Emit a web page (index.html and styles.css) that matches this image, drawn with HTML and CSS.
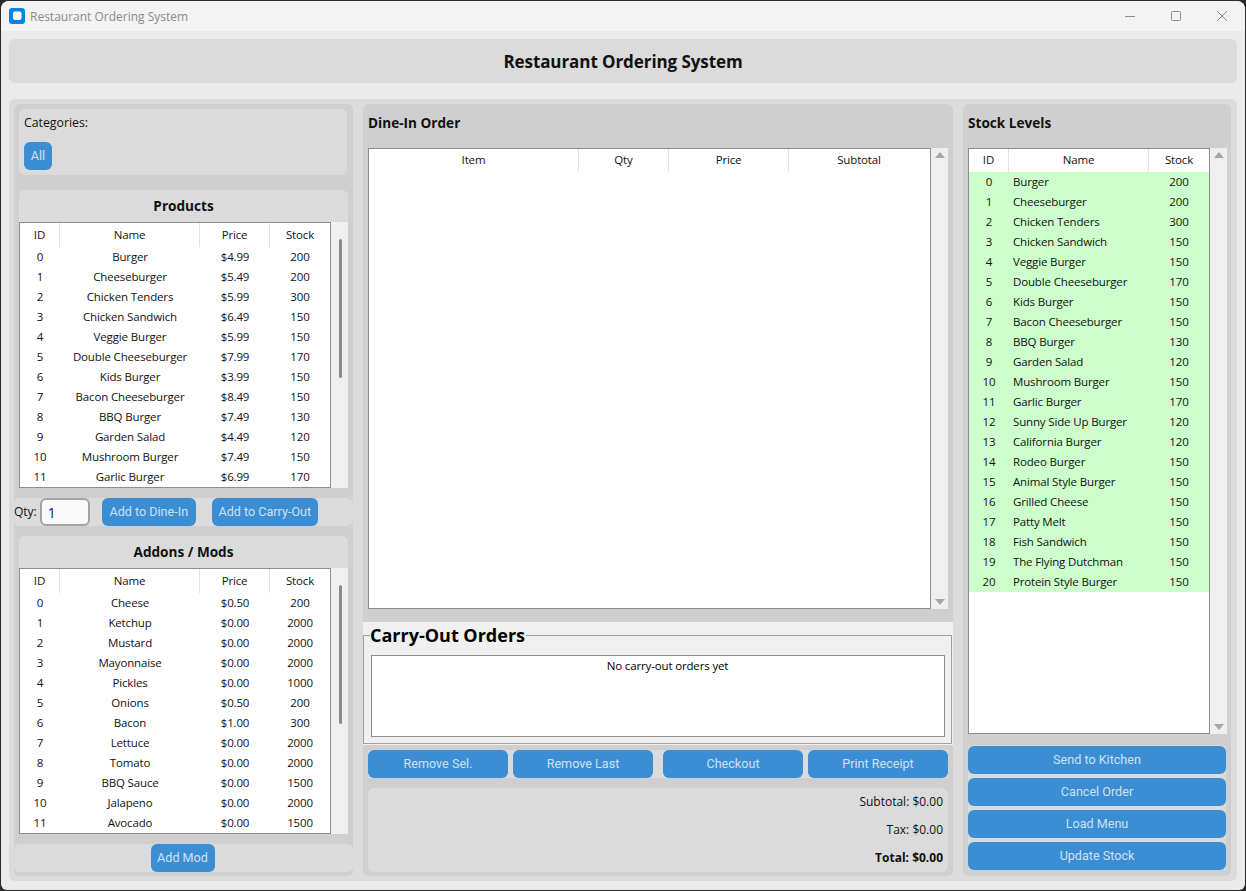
FILE: index.html
```html
<!DOCTYPE html>
<html lang="en">
<head>
  <meta charset="UTF-8">
  <title>Restaurant Ordering System</title>
  <link rel="stylesheet" href="styles.css">
</head>
<body>
  <div class="window">
    <!-- Title bar -->
    <div class="titlebar">
      <div class="app-title">
        <svg class="app-icon" width="16" height="16" viewBox="0 0 16 16"><rect width="16" height="16" rx="3" fill="#0a84e8"/><rect x="4" y="3.5" width="8.5" height="8.5" rx="2" fill="#fff"/></svg>
        <span>Restaurant Ordering System</span>
      </div>
      <div class="win-controls">
        <svg width="12" height="12" viewBox="0 0 12 12"><path d="M1 6.5H11" stroke="#8c8c8c" fill="none"/></svg>
        <svg width="12" height="12" viewBox="0 0 12 12"><rect x="1.5" y="1.5" width="9" height="9" rx="1" stroke="#8c8c8c" fill="none"/></svg>
        <svg width="12" height="12" viewBox="0 0 12 12"><path d="M1 1L11 11M11 1L1 11" stroke="#8c8c8c" fill="none"/></svg>
      </div>
    </div>

    <div class="app-header">Restaurant Ordering System</div>

    <div class="main">
      <!-- Left column -->
      <div class="col col-left">
        <div class="categories">
          <div class="cat-label">Categories:</div>
          <button class="btn btn-all"><span>All</span></button>
        </div>

        <div class="list-box products-box">
          <div class="box-title">Products</div>
          <div class="tree-wrap">
            <div class="tree tree-small">
              <table>
                <colgroup><col class="w40"><col class="w140"><col class="w70"><col class="w60"></colgroup>
                <thead><tr><th>ID</th><th>Name</th><th>Price</th><th>Stock</th></tr></thead>
                <tbody>
                  <tr><td>0</td><td>Burger</td><td>$4.99</td><td>200</td></tr>
                  <tr><td>1</td><td>Cheeseburger</td><td>$5.49</td><td>200</td></tr>
                  <tr><td>2</td><td>Chicken Tenders</td><td>$5.99</td><td>300</td></tr>
                  <tr><td>3</td><td>Chicken Sandwich</td><td>$6.49</td><td>150</td></tr>
                  <tr><td>4</td><td>Veggie Burger</td><td>$5.99</td><td>150</td></tr>
                  <tr><td>5</td><td>Double Cheeseburger</td><td>$7.99</td><td>170</td></tr>
                  <tr><td>6</td><td>Kids Burger</td><td>$3.99</td><td>150</td></tr>
                  <tr><td>7</td><td>Bacon Cheeseburger</td><td>$8.49</td><td>150</td></tr>
                  <tr><td>8</td><td>BBQ Burger</td><td>$7.49</td><td>130</td></tr>
                  <tr><td>9</td><td>Garden Salad</td><td>$4.49</td><td>120</td></tr>
                  <tr><td>10</td><td>Mushroom Burger</td><td>$7.49</td><td>150</td></tr>
                  <tr><td>11</td><td>Garlic Burger</td><td>$6.99</td><td>170</td></tr>
                </tbody>
              </table>
            </div>
            <div class="scroll scroll-thin"><div class="thumb thumb-products"></div></div>
          </div>
        </div>

        <div class="qty-row">
          <label class="qty-label" for="qty">Qty:</label>
          <input class="qty-input" id="qty" type="text" value="1">
          <button class="btn btn-dine"><span>Add to Dine-In</span></button>
          <button class="btn btn-carry"><span>Add to Carry-Out</span></button>
        </div>

        <div class="list-box addons-box">
          <div class="box-title">Addons / Mods</div>
          <div class="tree-wrap">
            <div class="tree tree-small">
              <table>
                <colgroup><col class="w40"><col class="w140"><col class="w70"><col class="w60"></colgroup>
                <thead><tr><th>ID</th><th>Name</th><th>Price</th><th>Stock</th></tr></thead>
                <tbody>
                  <tr><td>0</td><td>Cheese</td><td>$0.50</td><td>200</td></tr>
                  <tr><td>1</td><td>Ketchup</td><td>$0.00</td><td>2000</td></tr>
                  <tr><td>2</td><td>Mustard</td><td>$0.00</td><td>2000</td></tr>
                  <tr><td>3</td><td>Mayonnaise</td><td>$0.00</td><td>2000</td></tr>
                  <tr><td>4</td><td>Pickles</td><td>$0.00</td><td>1000</td></tr>
                  <tr><td>5</td><td>Onions</td><td>$0.50</td><td>200</td></tr>
                  <tr><td>6</td><td>Bacon</td><td>$1.00</td><td>300</td></tr>
                  <tr><td>7</td><td>Lettuce</td><td>$0.00</td><td>2000</td></tr>
                  <tr><td>8</td><td>Tomato</td><td>$0.00</td><td>2000</td></tr>
                  <tr><td>9</td><td>BBQ Sauce</td><td>$0.00</td><td>1500</td></tr>
                  <tr><td>10</td><td>Jalapeno</td><td>$0.00</td><td>2000</td></tr>
                  <tr><td>11</td><td>Avocado</td><td>$0.00</td><td>1500</td></tr>
                </tbody>
              </table>
            </div>
            <div class="scroll scroll-thin"><div class="thumb thumb-addons"></div></div>
          </div>
        </div>

        <div class="mod-row">
          <button class="btn btn-mod"><span>Add Mod</span></button>
        </div>
      </div>

      <!-- Center column -->
      <div class="col col-center">
        <div class="order-section">
          <div class="section-title">Dine-In Order</div>
          <div class="tree-wrap order-wrap">
            <div class="tree tree-large">
              <table>
                <colgroup><col class="w210"><col class="w90"><col class="w120"><col class="w140"></colgroup>
                <thead><tr><th>Item</th><th>Qty</th><th>Price</th><th>Subtotal</th></tr></thead>
              </table>
            </div>
            <div class="scroll">
              <span class="arrow-up"></span>
              <span class="arrow-down"></span>
            </div>
          </div>
        </div>

        <div class="carry-section">
          <fieldset class="carry-frame">
            <legend>Carry-Out Orders</legend>
            <div class="carry-list">No carry-out orders yet</div>
          </fieldset>
        </div>

        <div class="action-row">
          <button class="btn"><span>Remove Sel.</span></button>
          <button class="btn"><span>Remove Last</span></button>
          <button class="btn btn-gap"><span>Checkout</span></button>
          <button class="btn"><span>Print Receipt</span></button>
        </div>

        <div class="totals">
          <div>Subtotal: $0.00</div>
          <div>Tax: $0.00</div>
          <div class="total-strong">Total: $0.00</div>
        </div>
      </div>

      <!-- Right column -->
      <div class="col col-right">
        <div class="section-title">Stock Levels</div>
        <div class="tree-wrap stock-wrap">
          <div class="tree tree-large">
            <table class="stock-table">
              <colgroup><col class="w40"><col class="w140"><col class="w60"></colgroup>
              <thead><tr><th>ID</th><th>Name</th><th>Stock</th></tr></thead>
              <tbody>
                <tr><td>0</td><td>Burger</td><td>200</td></tr>
                <tr><td>1</td><td>Cheeseburger</td><td>200</td></tr>
                <tr><td>2</td><td>Chicken Tenders</td><td>300</td></tr>
                <tr><td>3</td><td>Chicken Sandwich</td><td>150</td></tr>
                <tr><td>4</td><td>Veggie Burger</td><td>150</td></tr>
                <tr><td>5</td><td>Double Cheeseburger</td><td>170</td></tr>
                <tr><td>6</td><td>Kids Burger</td><td>150</td></tr>
                <tr><td>7</td><td>Bacon Cheeseburger</td><td>150</td></tr>
                <tr><td>8</td><td>BBQ Burger</td><td>130</td></tr>
                <tr><td>9</td><td>Garden Salad</td><td>120</td></tr>
                <tr><td>10</td><td>Mushroom Burger</td><td>150</td></tr>
                <tr><td>11</td><td>Garlic Burger</td><td>170</td></tr>
                <tr><td>12</td><td>Sunny Side Up Burger</td><td>120</td></tr>
                <tr><td>13</td><td>California Burger</td><td>120</td></tr>
                <tr><td>14</td><td>Rodeo Burger</td><td>150</td></tr>
                <tr><td>15</td><td>Animal Style Burger</td><td>150</td></tr>
                <tr><td>16</td><td>Grilled Cheese</td><td>150</td></tr>
                <tr><td>17</td><td>Patty Melt</td><td>150</td></tr>
                <tr><td>18</td><td>Fish Sandwich</td><td>150</td></tr>
                <tr><td>19</td><td>The Flying Dutchman</td><td>150</td></tr>
                <tr><td>20</td><td>Protein Style Burger</td><td>150</td></tr>
              </tbody>
            </table>
          </div>
          <div class="scroll">
            <span class="arrow-up"></span>
            <span class="arrow-down"></span>
          </div>
        </div>
        <div class="stock-actions">
          <button class="btn"><span>Send to Kitchen</span></button>
          <button class="btn"><span>Cancel Order</span></button>
          <button class="btn"><span>Load Menu</span></button>
          <button class="btn"><span>Update Stock</span></button>
        </div>
      </div>
    </div>
  </div>
</body>
</html>
```

FILE: styles.css
```css
html, body {
  margin: 0;
  height: 100%;
  background-color: #2a2a2a;
  overflow: hidden;
}
body {
  font-family: "Open Sans", "Noto Sans", sans-serif;
  font-size: 12px;
  color: #111;
}
.window {
  box-sizing: border-box;
  width: 1244px;
  height: 889px;
  margin: 1px 0 0 1px;
  background-color: #ebebeb;
  border-radius: 8px 8px 6px 6px;
  overflow: hidden;
}

/* title bar */
.titlebar {
  display: flex;
  align-items: center;
  justify-content: space-between;
  height: 30px;
  background-color: #f3f3f3;
}
.app-title {
  display: flex;
  align-items: center;
  gap: 5px;
  padding-left: 8px;
  color: #8a8a8a;
}
.win-controls {
  display: flex;
  gap: 34px;
  padding-right: 17px;
}

.app-header {
  height: 44px;
  margin: 8px 8px 16px;
  line-height: 46px;
  text-align: center;
  font-size: 17px;
  font-weight: bold;
  letter-spacing: -0.08px;
  background-color: #dbdbdb;
  border-radius: 6px;
}

.main {
  display: grid;
  grid-template-columns: 339px 590px 268px;
  gap: 10px;
  height: 772px;
  margin: 0 8px;
  padding: 5px;
  background-color: #dbdbdb;
  border-radius: 6px;
}
.col {
  display: flex;
  flex-direction: column;
  background-color: #cfcfcf;
  border-radius: 6px;
}

/* buttons - square backing shows at the rounded corners */
.btn {
  height: 28px;
  padding: 0;
  border: none;
  background-color: #dbdbdb;
  color: #cfe0f2;
  font-family: Roboto, sans-serif;
  font-size: 12.6px;
}
.btn span {
  display: block;
  height: 100%;
  line-height: 27px;
  background-color: #3b8ed3;
  border-radius: 6px;
}

/* left column */
.categories {
  height: 66px;
  margin: 5px 6px 15px 5px;
  padding: 5px 5px;
  box-sizing: border-box;
  background-color: #dbdbdb;
  border-radius: 6px;
}
.cat-label {
  height: 28px;
  font-size: 12.3px;
}
.btn-all {
  width: 28px;
}
.list-box {
  margin: 0 5px 10px;
  background-color: #dbdbdb;
  border-radius: 6px 6px 0 0;
}
.box-title {
  height: 32px;
  line-height: 32px;
  text-align: center;
  font-size: 13.6px;
  font-weight: bold;
}
.products-box .tree-wrap,
.addons-box .tree-wrap {
  height: 266px;
}
.qty-row {
  display: flex;
  align-items: center;
  height: 28px;
  margin-bottom: 10px;
  background-color: #dbdbdb;
  border-radius: 6px;
}
.qty-label {
  padding-bottom: 2px;
}
.qty-input {
  box-sizing: border-box;
  width: 50px;
  height: 28px;
  margin-left: 3px;
  padding: 0 6px;
  border: 2px solid #a3a3a3;
  border-radius: 6px;
  background-color: #f9f9f9;
  color: #1a1a2a;
  font-family: "Open Sans", sans-serif;
  font-size: 14px;
}
.btn-dine {
  width: 94px;
  margin-left: 12px;
}
.btn-carry {
  width: 106px;
  margin-left: 16px;
}
.mod-row {
  display: flex;
  justify-content: center;
  height: 28px;
  background-color: #dbdbdb;
  border-radius: 6px;
}
.btn-mod {
  width: 64px;
  margin-right: 2px;
}

/* trees */
.tree-wrap {
  display: flex;
}
.tree {
  flex: 1;
  box-sizing: border-box;
  background-color: #fff;
  border: 1px solid #8a8d91;
  overflow: hidden;
  font-size: 11.5px;
  letter-spacing: -0.15px;
}
.tree table {
  border-collapse: separate;
  border-spacing: 0;
  table-layout: fixed;
}
.tree th {
  height: 24px;
  padding: 0 0 2px;
  box-sizing: border-box;
  font-weight: normal;
  border-right: 1px solid #e2e2e2;
}
.tree-large th {
  height: 23px;
}
.tree th:last-child {
  border-right: none;
}
.tree td {
  height: 20px;
  padding: 0 0 2px;
  box-sizing: border-box;
  text-align: center;
  white-space: nowrap;
}
.stock-table tbody tr {
  background-color: #ccffcc;
}
.stock-table td:nth-child(2) {
  text-align: left;
  padding-left: 4px;
}
.w40 { width: 40px; }
.w60 { width: 60px; }
.w70 { width: 70px; }
.w90 { width: 90px; }
.w120 { width: 120px; }
.w140 { width: 140px; }
.w210 { width: 210px; }

.scroll {
  display: flex;
  flex-direction: column;
  justify-content: space-between;
  align-items: center;
  box-sizing: border-box;
  width: 17px;
  padding: 4px 0;
  background-color: #efefef;
}
.scroll-thin {
  display: block;
  padding: 17px 0 0 8px;
}
.thumb {
  width: 3px;
  background-color: #8b8b8b;
  border-radius: 2px;
}
.thumb-products {
  height: 139px;
}
.thumb-addons {
  height: 139px;
}
.arrow-up,
.arrow-down {
  width: 0;
  height: 0;
  border-left: 5px solid transparent;
  border-right: 5px solid transparent;
}
.arrow-up {
  border-bottom: 6px solid #a6a6a6;
}
.arrow-down {
  border-top: 6px solid #a6a6a6;
}

/* center column */
.section-title {
  height: 44px;
  padding: 5px 5px 0;
  box-sizing: border-box;
  line-height: 28px;
  font-size: 13.6px;
  font-weight: bold;
}
.order-section {
  height: 518px;
}
.order-wrap {
  height: 461px;
  margin: 0 5px;
}
.carry-section {
  box-sizing: border-box;
  height: 123px;
  background-color: #f0f0f0;
}
.carry-frame {
  box-sizing: border-box;
  height: 122px;
  margin: 0 1px 0 0;
  padding: 6px 6px 6px 7px;
  border: 1px solid #a0a0a0;
}
.carry-frame legend {
  padding: 0 1px 0 0;
  margin-left: -1px;
  color: #000;
  font-size: 18px;
  font-weight: bold;
  line-height: 27px;
}
.carry-list {
  box-sizing: border-box;
  height: 82px;
  padding-left: 19px;
  background-color: #fff;
  border: 1px solid #8a8d91;
  text-align: center;
  line-height: 20px;
  font-size: 11.5px;
  letter-spacing: -0.15px;
  color: #000;
}
.action-row {
  display: flex;
  gap: 5px;
  margin: 5px 5px 0;
  background-color: #dbdbdb;
}
.action-row .btn {
  width: 140px;
}
.action-row .btn-gap {
  margin-left: 5px;
}
.totals {
  display: flex;
  flex-direction: column;
  justify-content: space-around;
  box-sizing: border-box;
  height: 84px;
  margin: 10px 5px 0;
  padding: 0 5px 1px;
  text-align: right;
  background-color: #dbdbdb;
  border-radius: 6px;
}
.total-strong {
  font-weight: bold;
}

/* right column */
.stock-wrap {
  height: 586px;
  margin: 0 4px 0 5px;
}
.stock-actions {
  display: flex;
  flex-direction: column;
  gap: 4px;
  margin: 11px 5px 0;
  padding-top: 1px;
  background-color: #dbdbdb;
  border-radius: 6px;
}
```
